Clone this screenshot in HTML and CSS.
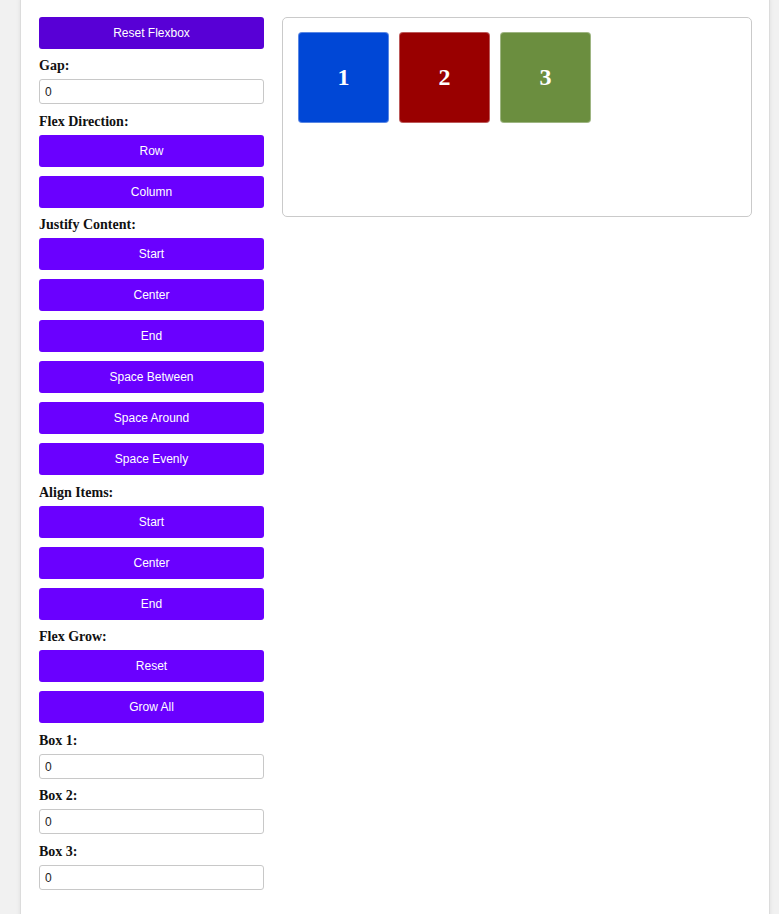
FILE: index.html
```html
<!DOCTYPE html>
<html>
<head>
<meta charset="utf-8">
<title>Flexbox Playground</title>
<link rel="stylesheet" href="styles.css">
</head>
<body>
<div class="container">
  <div class="controls">
    <button class="btn btn-reset">Reset Flexbox</button>
    <label class="label">Gap:</label>
    <input class="field" type="text" value="0">
    <label class="label">Flex Direction:</label>
    <button class="btn">Row</button>
    <button class="btn">Column</button>
    <label class="label">Justify Content:</label>
    <button class="btn">Start</button>
    <button class="btn">Center</button>
    <button class="btn">End</button>
    <button class="btn">Space Between</button>
    <button class="btn">Space Around</button>
    <button class="btn">Space Evenly</button>
    <label class="label label-loose">Align Items:</label>
    <button class="btn">Start</button>
    <button class="btn">Center</button>
    <button class="btn">End</button>
    <label class="label">Flex Grow:</label>
    <button class="btn">Reset</button>
    <button class="btn">Grow All</button>
    <label class="label label-loose">Box 1:</label>
    <input class="field" type="text" value="0">
    <label class="label label-tight">Box 2:</label>
    <input class="field" type="text" value="0">
    <label class="label">Box 3:</label>
    <input class="field" type="text" value="0">
  </div>
  <div class="preview">
    <div class="box box-blue">1</div>
    <div class="box box-red">2</div>
    <div class="box box-green">3</div>
  </div>
</div>
</body>
</html>
```
FILE: styles.css
```css
html, body {
  margin: 0;
  padding: 0;
}
body {
  background: #f1f1f1;
  font-family: "Liberation Serif", "Times New Roman", serif;
  overflow: hidden;
}
.container {
  box-sizing: border-box;
  width: 750px;
  min-height: calc(100vh + 30px);
  margin-left: 20px;
  margin-top: -8px;
  padding: 24px 17px 18px 18px;
  background: #fff;
  border: 1px solid #dcdcdc;
  border-radius: 8px;
  box-shadow: 0 0 4px rgba(0, 0, 0, 0.08);
  display: flex;
  align-items: flex-start;
  gap: 18px;
}
.controls {
  width: 225px;
  flex: none;
  display: flex;
  flex-direction: column;
}
.btn {
  box-sizing: border-box;
  height: 32px;
  margin: 0 0 9px 0;
  padding: 0;
  border: none;
  border-radius: 3px;
  background: #6a00ff;
  color: #fff;
  font-family: "Liberation Sans", Arial, sans-serif;
  font-size: 12px;
  text-align: center;
}
.btn-reset {
  background: #5800d6;
}
.label {
  display: block;
  font-size: 14px;
  font-weight: bold;
  line-height: 16px;
  margin: 0 0 5px 0;
  color: #111;
}
.label-loose {
  margin-top: 1px;
}
.label-tight {
  margin-top: -1px;
}
.field {
  box-sizing: border-box;
  height: 25px;
  width: 225px;
  margin: 0 0 10px 0;
  padding: 0 5px;
  border: 1px solid #c8c8c8;
  border-radius: 3px;
  font-family: "Liberation Sans", Arial, sans-serif;
  font-size: 12px;
  color: #222;
  background: #fff;
}
.preview {
  flex: 1;
  box-sizing: border-box;
  height: 200px;
  border: 1px solid #cacaca;
  border-radius: 5px;
  padding: 14px 15px;
  display: flex;
  gap: 10px;
  align-items: flex-start;
}
.box {
  box-sizing: border-box;
  width: 91px;
  height: 91px;
  border: 1px solid rgba(255, 255, 255, 0.35);
  border-radius: 4px;
  color: #fff;
  font-family: "Liberation Serif", "Times New Roman", serif;
  font-weight: bold;
  font-size: 24px;
  display: flex;
  align-items: center;
  justify-content: center;
}
.box-blue { background: #0047d6; }
.box-red { background: #990000; }
.box-green { background: #6b8e3f; }
```
